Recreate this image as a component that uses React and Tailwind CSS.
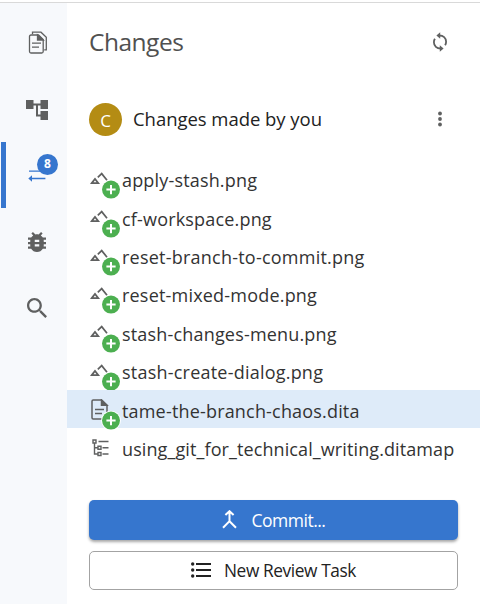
import React from "react";

const files = [
  { name: "apply-stash.png", kind: "image", added: true, track: "tracking-[0.17px]" },
  { name: "cf-workspace.png", kind: "image", added: true, track: "tracking-[0.18px]" },
  { name: "reset-branch-to-commit.png", kind: "image", added: true, track: "tracking-[0.23px]" },
  { name: "reset-mixed-mode.png", kind: "image", added: true, track: "tracking-[0.2px]" },
  { name: "stash-changes-menu.png", kind: "image", added: true, track: "tracking-[0.18px]" },
  { name: "stash-create-dialog.png", kind: "image", added: true, track: "tracking-[0.22px]" },
  { name: "tame-the-branch-chaos.dita", kind: "doc", added: true, selected: true, track: "tracking-[0.18px]" },
  { name: "using_git_for_technical_writing.ditamap", kind: "map", track: "tracking-[0.1px]" },
];

const DocsIcon = () => (
  <svg width="20" height="24" viewBox="0 0 20 24" fill="none" stroke="#5f6060" strokeWidth="1.3">
    <path d="M4.5 3.2V1.2H13L18.3 6.3V18.8H16.2" />
    <path d="M9.8 4H3Q1.5 4 1.5 5.5V20.5Q1.5 22 3 22H13.7Q15.2 22 15.2 20.5V8.5L10.5 4Z" />
    <path d="M9.5 4V9H15.2Z" fill="#5f6060" />
    <path d="M4 12.2H13M4 16.2H11" />
  </svg>
);

const TreeIcon = () => (
  <svg width="22" height="20" viewBox="0 0 22 20" fill="#5f6060">
    <path d="M0 0H7.5V9H0ZM14.5 0H22V9H14.5ZM14.5 11H22V20H14.5Z" />
    <path d="M7 4.5H15M11 4.5V15.5H15" fill="none" stroke="#5f6060" strokeWidth="2" />
  </svg>
);

const ArrowsIcon = () => (
  <svg width="20" height="16" viewBox="0 0 20 16" fill="#3676ce">
    <path d="M1 3.4H13.5V1.2L16.6 4.1L13.5 6.6V4.8H1Z" />
    <path d="M17.4 10.8H4V8.3L0.3 11.5L4 14.7V12.2H17.4Z" />
  </svg>
);

const BugIcon = () => (
  <svg width="18" height="20" viewBox="4 3 16 18" preserveAspectRatio="none" fill="#5f6060">
    <path d="M20 8h-2.81c-.45-.78-1.07-1.45-1.82-1.96L17 4.41 15.59 3l-2.17 2.17C12.96 5.06 12.49 5 12 5s-.96.06-1.41.17L8.41 3 7 4.41l1.62 1.63C7.88 6.55 7.26 7.22 6.81 8H4v2h2.09c-.05.33-.09.66-.09 1v1H4v2h2v1c0 .34.04.67.09 1H4v2h2.81c1.04 1.79 2.97 3 5.19 3s4.15-1.21 5.19-3H20v-2h-2.09c.05-.33.09-.66.09-1v-1h2v-2h-2v-1c0-.34-.04-.67-.09-1H20V8zm-6 8h-4v-2h4v2zm0-4h-4v-2h4v2z" />
  </svg>
);

const SearchIcon = () => (
  <svg width="20" height="20" viewBox="3 3 17.5 17.5" fill="#5f6060">
    <path d="M15.5 14h-.79l-.28-.27C15.41 12.59 16 11.11 16 9.5 16 5.91 13.09 3 9.5 3S3 5.91 3 9.5 5.91 16 9.5 16c1.61 0 3.09-.59 4.23-1.57l.27.28v.79l5 4.99L20.49 19l-4.99-5zm-6 0C7.01 14 5 11.99 5 9.5S7.01 5 9.5 5 14 7.01 14 9.5 11.99 14 9.5 14z" />
  </svg>
);

const RefreshIcon = () => (
  <svg width="16" height="20" viewBox="0 0 16 20" fill="none" stroke="#5f6060" strokeWidth="1.8">
    <path d="M6.8 3.5C11.3 3.2 14.1 6.2 14.1 9.8C14.1 11.2 13.7 12.4 13.1 13.3" />
    <path d="M9.2 16.5C4.7 16.8 1.9 13.8 1.9 10.2C1.9 8.8 2.3 7.6 2.9 6.7" />
    <path d="M8.2 0.2V6.8L4.4 3.5ZM7.8 13.2V19.8L11.6 16.5Z" fill="#5f6060" stroke="none" />
  </svg>
);

const FileIcon = ({ kind }) => {
  if (kind === "image")
    return (
      <svg className="-ml-px" width="18" height="13" viewBox="0 0 18 13" fill="none" stroke="#5f6060" strokeWidth="1.7">
        <path d="M1.7 11.1L5 6.9L8.3 11.1Z" />
        <path d="M7.8 5.3L11.7 1.6L17 8.2" />
      </svg>
    );
  if (kind === "doc")
    return (
      <svg className="relative top-px" width="18" height="21" viewBox="0 0 18 21" fill="none" stroke="#5f6060" strokeWidth="1.5">
        <path d="M10.5 1H2.2Q1 1 1 2.2V18.8Q1 20 2.2 20H14.8Q16 20 16 18.8V6.3Z" />
        <path d="M10.5 1V6.3H16Z" fill="#5f6060" />
        <path d="M4 10.5H13M4 14.5H11" />
      </svg>
    );
  return (
    <svg className="relative left-px top-px" width="18" height="18" viewBox="0 0 18 18" fill="none" stroke="#5f6060" strokeWidth="1.4">
      <path d="M1 1H4V4H1ZM6 7.3H9V10.3H6ZM6 13.5H9V16.5H6Z" />
      <path d="M2.5 4V15H6M2.5 8.8H6M6.5 2.5H16.5M10.5 8.8H16.5M10.5 15H16.5" />
    </svg>
  );
};

const AddedBadge = () => (
  <svg className="absolute left-[34px] top-[19.6px]" width="20" height="22" viewBox="0 0 20 22">
    <circle cx="10" cy="10.6" r="9.9" fill="#fff" />
    <circle cx="10" cy="10.6" r="9" fill="#4caf50" />
    <path d="M10 6V15.2M5.4 10.6H14.6" stroke="#fff" strokeWidth="2" />
  </svg>
);

function FileRow({ file }) {
  return (
    <li className={`relative flex h-[38.4px] items-center pl-[22px] ${file.selected ? "bg-[#deebf9]" : ""}`}>
      <span className="flex w-[33px] shrink-0 items-center pb-px pl-[2px]">
        <FileIcon kind={file.kind} />
      </span>
      {file.added && <AddedBadge />}
      <span className={`whitespace-nowrap pt-[3px] text-[18px] leading-6 text-[#333] ${file.track}`}>{file.name}</span>
    </li>
  );
}

export default function App() {
  return (
    <div className="h-[604px] w-[480px] overflow-hidden bg-white pt-[2px] font-['Open_Sans','Noto_Sans',sans-serif]">
      <div className="flex h-[602px] border-t border-[#d9d9d9]">
        <aside className="flex w-[67px] shrink-0 flex-col bg-[#f7f9fc]">
          <div className="flex h-[73px] pl-[28px] pt-[28px]"><DocsIcon /></div>
          <div className="flex h-[66px] pl-[26px] pt-[24px]"><TreeIcon /></div>
          <div className="relative ml-px flex h-[66px] border-l-[5px] border-[#3676ce] pl-[22px] pt-[25px]">
            <ArrowsIcon />
            <span className="absolute left-[31px] top-[11.5px] flex size-[21px] items-center justify-center rounded-full bg-[#3676ce] text-[12px] font-bold leading-none text-white">8</span>
          </div>
          <div className="flex h-[66px] pl-[28px] pt-[24px]"><BugIcon /></div>
          <div className="flex h-[66px] pl-[27px] pt-[24px]"><SearchIcon /></div>
        </aside>

        <main className="flex min-w-0 flex-1 flex-col">
          <header className="flex h-[78px] items-center justify-between pl-[22px] pr-[32px]">
            <h1 className="text-[24.5px] leading-8 tracking-[-0.5px] text-[#505050]">Changes</h1>
            <RefreshIcon />
          </header>

          <section className="flex h-[76.6px] items-center pl-[22px] pr-[37px]">
            <span className="flex size-[33px] items-center justify-center rounded-full bg-[#b48c14] pt-[3px] text-[17px] leading-none text-white">C</span>
            <span className="ml-[11px] flex-1 whitespace-nowrap text-[18.5px] leading-6 tracking-[-0.04px] text-[#222]">Changes made by you</span>
            <svg width="6" height="16" viewBox="0 0 6 16" fill="#5f6060">
              <circle cx="3" cy="2.5" r="1.9" />
              <circle cx="3" cy="8" r="1.9" />
              <circle cx="3" cy="13.5" r="1.9" />
            </svg>
          </section>

          <ul className="mt-[2px]">
            {files.map((file) => (
              <FileRow key={file.name} file={file} />
            ))}
          </ul>

          <div className="flex flex-col gap-[11px] px-[22px] pt-[33px]">
            <button className="flex h-10 items-center justify-center rounded-[5px] bg-[#3676ce] text-[17.5px] tracking-[-0.5px] text-white shadow-[0_2px_3px_rgba(0,0,0,0.35)]">
              <svg className="mr-[15px]" width="15" height="19" viewBox="0 0 15 19" fill="none" stroke="#fff" strokeWidth="2">
                <path d="M3.4 5L7.5 1.2L11.6 5M7.5 1.5V11.2L1 17.7M7.5 11.2L14 17.7" />
              </svg>
              <span className="pt-px">Commit...</span>
            </button>
            <button className="flex h-[39px] items-center justify-center rounded-[5px] border border-[#a3a3a3] bg-white text-[17.3px] tracking-[-0.4px] text-[#222]">
              <svg className="mr-[13px]" width="20" height="16" viewBox="0 0 20 16" fill="#222">
                <circle cx="1.7" cy="2" r="1.7" />
                <circle cx="1.7" cy="8" r="1.7" />
                <circle cx="1.7" cy="14" r="1.7" />
                <path d="M5 1H20V3H5ZM5 7H20V9H5ZM5 13H20V15H5Z" />
              </svg>
              <span className="pt-[2px]">New Review Task</span>
            </button>
          </div>
        </main>
      </div>
    </div>
  );
}
